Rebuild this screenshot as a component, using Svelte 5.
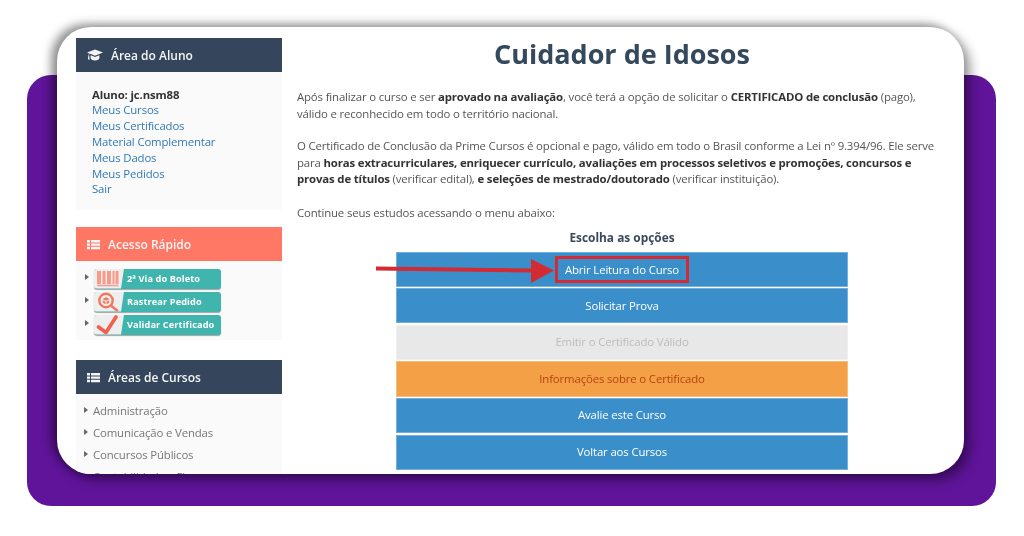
<script>
  const student = ['Meus Cursos', 'Meus Certificados', 'Material Complementar', 'Meus Dados', 'Meus Pedidos', 'Sair'];
  const areas = ['Administração', 'Comunicação e Vendas', 'Concursos Públicos', 'Contabilidade e Finanças'];
  const options = [
    { label: 'Abrir Leitura do Curso', kind: 'blue', mark: true },
    { label: 'Solicitar Prova', kind: 'blue' },
    { label: 'Emitir o Certificado Válido', kind: 'grey' },
    { label: 'Informações sobre o Certificado', kind: 'orange' },
    { label: 'Avalie este Curso', kind: 'blue' },
    { label: 'Voltar aos Cursos', kind: 'blue' }
  ];
</script>

{#snippet listIcon()}
  <svg class="hicon" viewBox="0 0 13 11" width="13" height="11" aria-hidden="true">
    <path fill="currentColor" d="M0 1h3v2.400H0zM4 1h9v2.400H4zM0 4.400h3v2.400H0zM4 4.400h9v2.400H4zM0 7.800h3v2.400H0zM4 7.800h9v2.400H4z"/>
  </svg>
{/snippet}

<div class="page">
  <div class="backdrop">
    <div class="window">
      <div class="content">
      <aside class="side">
        <section class="box first">
          <h3 class="head dark">
            <svg class="hicon cap" viewBox="0 0 16 12" width="16" height="12" aria-hidden="true">
              <path fill="currentColor" d="M8 0.500 16 3.600 8 6.700 2.600 4.600C2.200 5.200 2.100 6 2.100 6.700 2.500 6.900 2.600 7.400 2.300 7.700L2.700 10.500H0.900L1.300 7.700C1 7.400 1.100 6.900 1.500 6.700 1.500 5.800 1.700 5 2 4.300L0 3.600zM3.600 6.200 8 7.900 12.400 6.200V9C12.400 10.300 10.400 11.400 8 11.400S3.600 10.300 3.600 9z"/>
            </svg>
            Área do Aluno
          </h3>
          <div class="body student">
            <strong>Aluno: jc.nsm88</strong>
            {#each student as s}<a href="#top">{s}</a>{/each}
          </div>
        </section>

        <section class="box second">
          <h3 class="head coral">{@render listIcon()}Acesso Rápido</h3>
          <div class="body quick">
            <div class="qrow"><i class="tri"></i>
              <div class="qbtn">
                <span class="qicon">
                  <svg viewBox="0 0 30 20" width="30" height="20" aria-hidden="true">
                    <path fill="#f79a88" d="M3 2h4v13H3zM8.500 2h3v13h-3zM13 2h4v13h-4zM18.500 2h2v13h-2zM21.500 2h3v13h-3zM3 15.800h21.500v1.400H3z"/>
                  </svg>
                </span>
                <span class="qtext">2ª Via do Boleto</span>
              </div>
            </div>
            <div class="qrow"><i class="tri"></i>
              <div class="qbtn">
                <span class="qicon">
                  <svg viewBox="0 0 30 20" width="30" height="20" aria-hidden="true">
                    <circle cx="12" cy="8.500" r="6.700" fill="none" stroke="#f0785f" stroke-width="2.400"/>
                    <path fill="#f0785f" d="M8.500 7 12 5.200 15.500 7 12 8.800zM8.800 8.300l2.700 1.400v2.500L8.800 10.800zM15.200 8.300l-2.700 1.400v2.500l2.700-1.400z"/>
                    <path stroke="#f0785f" stroke-width="2.600" stroke-linecap="round" d="M17.500 14 23 18.500"/>
                  </svg>
                </span>
                <span class="qtext">Rastrear Pedido</span>
              </div>
            </div>
            <div class="qrow"><i class="tri"></i>
              <div class="qbtn">
                <span class="qicon">
                  <svg viewBox="0 0 30 20" width="30" height="20" aria-hidden="true">
                    <path fill="none" stroke="#f0604e" stroke-width="3.600" stroke-linecap="round" stroke-linejoin="round" d="M4.500 12 12 17.500 22 2"/>
                  </svg>
                </span>
                <span class="qtext">Validar Certificado</span>
              </div>
            </div>
          </div>
        </section>

        <section class="box third">
          <h3 class="head dark">{@render listIcon()}Áreas de Cursos</h3>
          <div class="body areas">
            {#each areas as a}<div class="arow"><i class="tri"></i>{a}</div>{/each}
          </div>
        </section>
      </aside>

      <main class="main">
        <h1>Cuidador de Idosos</h1>
        <p class="p1">Após finalizar o curso e ser <b>aprovado na avaliação</b>, você terá a opção de solicitar o <b>CERTIFICADO de conclusão</b> (pago), válido e reconhecido em todo o território nacional.</p>
        <p class="p2">O Certificado de Conclusão da Prime Cursos é opcional e pago, válido em todo o Brasil conforme a Lei nº 9.394/96. Ele serve para <b>horas extracurriculares, enriquecer currículo, avaliações em processos seletivos e promoções, concursos e provas de títulos</b> (verificar edital), <b>e seleções de mestrado/doutorado</b> (verificar instituição).</p>
        <p class="p3">Continue seus estudos acessando o menu abaixo:</p>
        <h4>Escolha as opções</h4>
        <div class="options">
          {#each options as o}
            <div class="opt {o.kind}"><span class:mark={o.mark}>{o.label}</span></div>
          {/each}
          <svg class="arrow" viewBox="0 0 180 28" width="180" height="28" aria-hidden="true">
            <path fill="#d32b33" d="M0 10.500 155 12.500V3L178 14.500 155 27V16.500L0 14.500z"/>
          </svg>
        </div>
      </main>
      </div>
    </div>
  </div>
</div>

<style>
  :global(body) { margin: 0; background: #fff; }
  .page {
    width: 1024px;
    height: 536px;
    padding: 75px 28px 30px 27px;
    box-sizing: border-box;
    overflow: hidden;
    font-family: "Open Sans", "Noto Sans", sans-serif;
  }
  .backdrop {
    position: relative;
    height: 431px;
    background: #60149a;
    border-radius: 24px;
  }
  .window {
    position: absolute;
    left: 30px;
    top: -48px;
    width: 907px;
    height: 447px;
    background: #fff;
    border-radius: 34px;
    box-shadow: -6px -3px 10px rgba(0, 0, 0, 0.42), 6px 6px 12px rgba(0, 0, 0, 0.42);
    overflow: hidden;
  }
  .content {
    display: flex;
    height: 100%;
    padding: 11px 0 0 19px;
    box-sizing: border-box;
    filter: blur(0.35px);
  }
  .side { width: 206px; flex: none; display: flex; flex-direction: column; }
  .box { background: #fafafa; }
  .first { height: 172px; }
  .second { margin-top: 17px; height: 113px; }
  .third { margin-top: 20px; flex: 1; overflow: hidden; }
  .head {
    margin: 0;
    height: 34px;
    display: flex;
    align-items: center;
    padding-left: 11px;
    color: #f4f5f6;
    font-size: 12px;
    font-weight: 600;
    box-sizing: border-box;
  }
  .dark { background: #35465c; }
  .coral { background: #ff7865; }
  .hicon { margin-right: 8px; flex: none; }
  .cap { margin-right: 8px; }
  .body { font-size: 11.400px; letter-spacing: -0.150px; }
  .student {
    display: flex;
    flex-direction: column;
    padding: 14.700px 16px;
    line-height: 15.800px;
    color: #333;
  }
  .student strong { font-weight: 700; color: #333; }
  .student a { color: #337ab7; text-decoration: none; }
  .quick { padding: 6px 0 0 9px; }
  .qrow { display: flex; align-items: center; height: 23px; }
  .tri {
    display: inline-block;
    width: 0;
    height: 0;
    border-left: 4px solid #666;
    border-top: 3.500px solid transparent;
    border-bottom: 3.500px solid transparent;
    flex: none;
  }
  .qrow .tri { margin: -3px 5px 0 0; }
  .qbtn {
    width: 127px;
    height: 20px;
    display: flex;
    border-radius: 3px;
    overflow: hidden;
    background: #40b5ae;
    box-shadow: 0 1px 1px rgba(0, 0, 0, 0.35);
    color: #fff;
  }
  .qicon {
    width: 30px;
    flex: none;
    background: #eeeeee;
    display: flex;
    justify-content: center;
    clip-path: polygon(0 0, 100% 0, 90% 100%, 0 100%);
  }
  .qtext {
    font-size: 9.200px;
    font-weight: 700;
    line-height: 20px;
    margin-left: 3px;
    white-space: nowrap;
    letter-spacing: 0.100px;
  }
  .areas { padding: 5px 0 0 8px; color: #777; }
  .arow { display: flex; align-items: center; height: 22px; white-space: nowrap; }
  .arow .tri { margin-right: 5px; }
  .main { width: 650px; margin-left: 15px; color: #555; font-size: 11.400px; letter-spacing: -0.150px; line-height: 16.600px; }
  h1 {
    margin: -2px 0 0;
    text-align: center;
    font-size: 27px;
    line-height: 36px;
    font-weight: 700;
    letter-spacing: 0;
    color: #34495e;
  }
  p { margin: 0; }
  .main b { font-weight: 700; color: #333; }
  .p1 { margin-top: 17px; padding-right: 8px; }
  .p2 { margin-top: 16px; padding-right: 8px; }
  .p3 { margin-top: 17px; }
  h4 {
    margin: 7px 0 0;
    text-align: center;
    font-size: 11.900px;
    letter-spacing: 0;
    line-height: 17px;
    font-weight: 700;
    color: #3b4a5a;
  }
  .options {
    position: relative;
    margin: 6px 0 0 99px;
    width: 452px;
    display: flex;
    flex-direction: column;
    gap: 1.300px;
  }
  .opt {
    height: 35.300px;
    display: flex;
    align-items: center;
    justify-content: center;
    font-size: 11.400px;
    letter-spacing: -0.150px;
    color: #fff;
    box-sizing: border-box;
    border: 1px solid rgba(255, 255, 255, 0.3);
  }
  .blue { background: #3a8fcb; }
  .grey { background: #e8e8e8; color: #bcbcbc; }
  .orange { background: #f3a046; color: #b8420f; }
  .mark {
    display: block;
    border: 3px solid #d32b33;
    padding: 3px 7px;
    line-height: 15px;
    margin-top: 1px;
  }
  .arrow { position: absolute; left: -20px; top: 4px; }
</style>
